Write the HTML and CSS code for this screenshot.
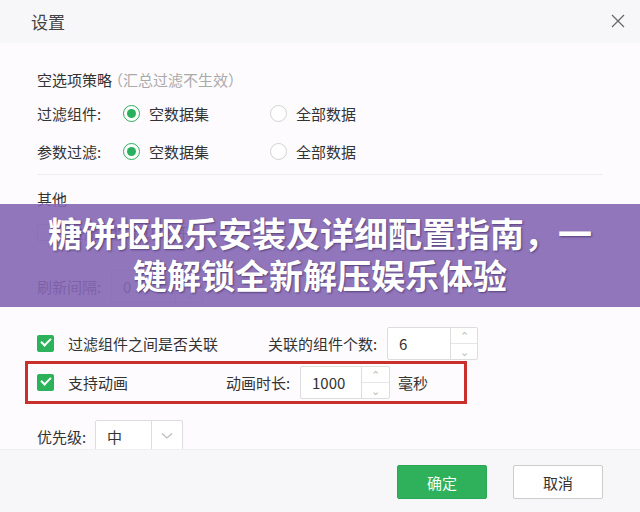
FILE: index.html
```html
<!DOCTYPE html>
<html lang="zh-CN">
<head>
  <meta charset="UTF-8" />
  <meta name="viewport" content="width=device-width, initial-scale=1.0"/>
  <title>设置</title>
  <link rel="stylesheet" href="styles.css">
</head>
<body>

  <div class="dialog">
    <header class="dialog-head">
      <div class="dialog-title">设置</div>
      <svg class="close" width="14" height="14" viewBox="0 0 14 14">
        <path d="M1 1L13 13M13 1L1 13" stroke="#666" stroke-width="1.2" fill="none"/>
      </svg>
    </header>

    <section class="dialog-body">
      <div class="section-title">空选项策略<span class="hint">（汇总过滤不生效）</span></div>

      <div class="row">
        <span class="label">过滤组件:</span>
        <span class="radio-opt"><i class="radio on"></i>空数据集</span>
        <span class="radio-opt"><i class="radio"></i>全部数据</span>
      </div>
      <div class="row">
        <span class="label">参数过滤:</span>
        <span class="radio-opt"><i class="radio on"></i>空数据集</span>
        <span class="radio-opt"><i class="radio"></i>全部数据</span>
      </div>

      <div class="divider"></div>

      <div class="section-title other">其他</div>

      <div class="row check-row">
        <i class="check off"></i><span>过滤组件默认展开</span>
      </div>

      <div class="row refresh-row">
        <span class="label short">刷新间隔:</span>
        <div class="spin wide">
          <span class="spin-val">0</span>
          <span class="spin-btns"><b>&#8963;</b><b class="down">&#8964;</b></span>
        </div>
      </div>

      <div class="row opt-row">
        <span class="opt-main"><i class="check"></i>过滤组件之间是否关联</span>
        <span class="opt-label">关联的组件个数:</span>
        <div class="spin">
          <span class="spin-val">6</span>
          <span class="spin-btns"><b>&#8963;</b><b class="down">&#8964;</b></span>
        </div>
      </div>

      <div class="row opt-row marked">
        <span class="opt-main narrow"><i class="check"></i>支持动画</span>
        <span class="opt-label">动画时长:</span>
        <div class="spin">
          <span class="spin-val">1000</span>
          <span class="spin-btns"><b>&#8963;</b><b class="down">&#8964;</b></span>
        </div>
        <span class="unit">毫秒</span>
      </div>

      <div class="row prio-row">
        <span class="label tiny">优先级:</span>
        <div class="select">
          <span class="select-val">中</span>
          <span class="select-arrow">
            <svg width="12" height="8" viewBox="0 0 12 8"><path d="M1 1.5L6 6L11 1.5" stroke="#bbb" stroke-width="1.2" fill="none"/></svg>
          </span>
        </div>
      </div>
    </section>

    <footer class="dialog-foot">
      <button class="btn ok">确定</button>
      <button class="btn cancel">取消</button>
    </footer>
  </div>

  <!-- banner laid over the dialog -->
  <div class="banner">
    <p>糖饼抠抠乐安装及详细配置指南，一<br>键解锁全新解压娱乐体验</p>
  </div>

</body>
</html>
```

FILE: styles.css
```css
body {
  margin: 0;
  font-family: "Noto Sans CJK SC", "Noto Sans", sans-serif;
  color: #333;
  background: #fdfbfe;
}

.dialog {
  width: 640px;
  height: 512px;
  display: flex;
  flex-direction: column;
  overflow: hidden;
}

.dialog-head {
  height: 43px;
  flex: none;
  background: #f7f6f9;
  display: flex;
  align-items: center;
  justify-content: space-between;
  padding: 0 15px 0 31px;
}

.dialog-title {
  font-size: 17px;
  color: #444;
}

.close {
  margin-top: -1px;
}

.dialog-body {
  height: 406px;
  flex: none;
  box-sizing: border-box;
  padding: 23px 37px 0;
  font-size: 15px;
}

.section-title {
  height: 28px;
  line-height: 28px;
}

.section-title .hint {
  color: #aaa;
  margin-left: -4px;
}

.section-title.other {
  height: 32px;
  line-height: 32px;
  margin-top: 8px;
}

.row {
  display: flex;
  align-items: center;
  height: 38px;
}

.label {
  width: 86px;
  flex: none;
}

.label.short {
  width: 74px;
}

.label.tiny {
  width: 58px;
}

.radio-opt {
  width: 147px;
  display: flex;
  align-items: center;
}

.radio {
  width: 15px;
  height: 15px;
  border: 1px solid #d2d2d2;
  border-radius: 50%;
  margin-right: 9px;
  position: relative;
  background: #fff;
}

.radio.on {
  border-color: #2aaf5c;
}

.radio.on::after {
  content: "";
  position: absolute;
  left: 3px;
  top: 3px;
  width: 9px;
  height: 9px;
  border-radius: 50%;
  background: #2aaf5c;
}

.divider {
  height: 1px;
  background: #eeedf1;
  margin-top: 4px;
}

.check {
  width: 17px;
  height: 17px;
  border-radius: 2px;
  background: #2db25c;
  margin-right: 14px;
  position: relative;
  flex: none;
}

.check::after {
  content: "";
  position: absolute;
  left: 4px;
  top: 3px;
  width: 8px;
  height: 4px;
  border-left: 2px solid #fff;
  border-bottom: 2px solid #fff;
  transform: rotate(-45deg);
}

.check.off {
  background: #fff;
  border: 1px solid #ccc;
  box-sizing: border-box;
}

.check.off::after {
  display: none;
}

.check-row {
  height: 34px;
}

.refresh-row {
  height: 36px;
  margin-top: 19px;
}

.spin {
  display: flex;
  height: 33px;
  width: 91px;
  box-sizing: border-box;
  border: 1px solid #ddd;
  border-radius: 2px;
  background: #fff;
}

.spin.wide {
  width: 92px;
}

.spin-val {
  flex: 1;
  display: flex;
  align-items: center;
  padding-left: 11px;
}

.spin-btns {
  width: 26px;
  border-left: 1px solid #ddd;
  display: flex;
  flex-direction: column;
}

.spin-btns b {
  flex: 1;
  font-weight: normal;
  font-size: 11px;
  color: #bbb;
  display: flex;
  align-items: center;
  justify-content: center;
  line-height: 1;
}

.spin-btns b.down {
  border-top: 1px solid #e6e6e6;
}

.opt-row {
  height: 36px;
  margin-top: 21px;
}

.opt-main {
  width: 231px;
  display: flex;
  align-items: center;
}

.opt-main.narrow {
  width: 189px;
}

.opt-label {
  width: 119px;
}

.opt-row .spin + .unit {
  margin-left: 8px;
}

.marked {
  margin: 0 0 0 -12px;
  padding: 0 0 0 9px;
  width: 427px;
  height: 37px;
  border: 3px solid #c9302c;
}

.marked .opt-label {
  width: 74px;
}

.marked .spin {
  width: 90px;
}

.marked .spin-btns {
  width: 27px;
}

.prio-row {
  height: 32px;
  margin-top: 16px;
}

.select {
  display: flex;
  width: 88px;
  height: 32px;
  box-sizing: border-box;
  border: 1px solid #ddd;
  border-radius: 2px;
  background: #fff;
}

.select-val {
  flex: 1;
  display: flex;
  align-items: center;
  padding-left: 11px;
}

.select-arrow {
  width: 30px;
  border-left: 1px solid #ddd;
  display: flex;
  align-items: center;
  justify-content: center;
}

.dialog-foot {
  flex: 1;
  background: #f7f6f9;
  border-top: 1px solid #efeef2;
  display: flex;
  justify-content: flex-end;
  align-items: flex-start;
  gap: 26px;
  padding: 15px 37px 0 0;
  position: relative;
}

.btn {
  width: 90px;
  height: 34px;
  font-family: inherit;
  font-size: 15px;
  border-radius: 2px;
  cursor: pointer;
}

.btn.ok {
  background: #2fb15b;
  border: 1px solid #2aa755;
  color: #f4fff6;
}

.btn.cancel {
  background: #fff;
  border: 1px solid #ccc;
  color: #333;
}

.banner {
  position: absolute;
  left: 0;
  top: 204px;
  width: 640px;
  height: 103px;
  background: rgba(133, 103, 180, 0.9);
  display: flex;
  align-items: center;
  justify-content: center;
}

.banner p {
  margin: 0;
  margin-top: -4px;
  font-size: 34px;
  font-weight: 700;
  line-height: 42px;
  color: #fff;
  text-align: center;
  text-shadow: 1px 1px 2px rgba(40, 20, 70, 0.55);
}
```
